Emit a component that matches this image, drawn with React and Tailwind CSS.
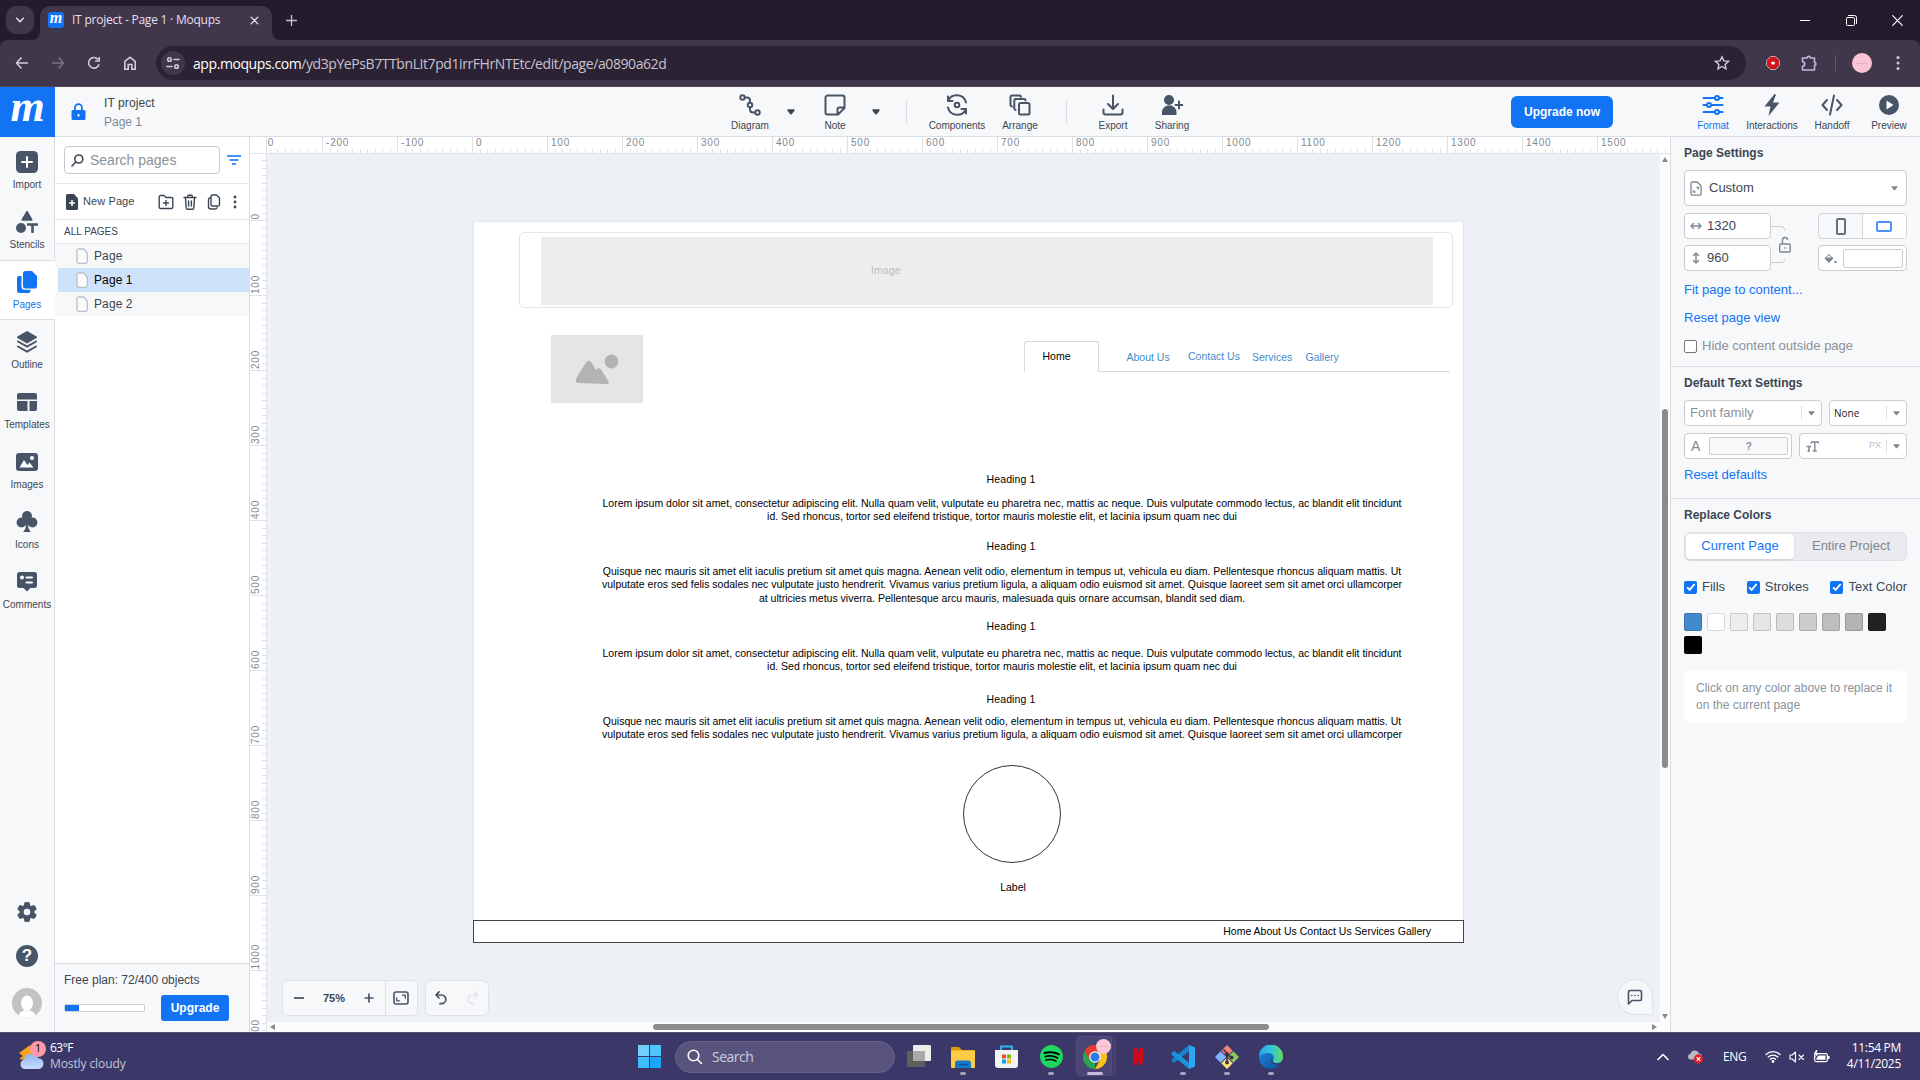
import React from "react";
import { SiNetflix, SiSpotify } from "react-icons/si";

function Ico({ w = 24, h, vb, sw = 2, fill = "none", className = "", children }) {
  return (
    <svg
      width={w}
      height={h || w}
      viewBox={vb || "0 0 24 24"}
      fill={fill}
      stroke={fill === "none" ? "currentColor" : "none"}
      strokeWidth={sw}
      strokeLinecap="round"
      strokeLinejoin="round"
      className={"shrink-0 " + className}
    >
      {children}
    </svg>
  );
}

/* ---------- Browser chrome ---------- */

function TabStrip() {
  return (
    <div className="flex h-10 items-start bg-[#241c2e] text-[#e6dfee]">
      <div className="mt-1.5 ml-1.5 flex h-7 w-7 items-center justify-center rounded-[10px] bg-[#41374b]">
        <Ico w={10} sw={3.6}><path d="M4 8l8 8 8-8" /></Ico>
      </div>
      <div className="relative mt-1.5 ml-[6px] flex h-[34px] w-[232px] items-center rounded-t-[10px] bg-[#41374b] pb-1.5">
        <svg className="absolute bottom-0 -left-2" width="8" height="8"><path d="M8 0v8H0a8 8 0 0 0 8-8z" fill="#41374b" /></svg>
        <svg className="absolute -right-2 bottom-0" width="8" height="8"><path d="M0 0v8h8a8 8 0 0 1-8-8z" fill="#41374b" /></svg>
        <div className="ml-[8px] flex h-4 w-4 items-center justify-center rounded-[3px] bg-[#1273f5]">
          <span className="-mt-[5px] font-['Liberation_Serif',serif] text-[16px] leading-4 font-bold text-white italic">m</span>
        </div>
        <span className="ml-2 w-[155px] text-[12px] leading-4 tracking-[-0.23px] whitespace-nowrap">IT project - Page 1 · Moqups</span>
        <Ico w={9} sw={3.6} className="ml-[23px]"><path d="M3 3l18 18M21 3L3 21" /></Ico>
      </div>
      <Ico w={11} sw={3} className="mt-[15px] ml-[14px] text-[#c9bfd3]"><path d="M12 1v22M1 12h22" /></Ico>
      <div className="ml-auto flex h-10 items-center pr-[17px] text-white">
        <span className="h-px w-[10px] bg-white" />
        <Ico w={11} sw={1} vb="0 0 11 11" className="ml-[36px]"><rect x=".5" y="2.5" width="8" height="8" rx="1" /><path d="M2.5 .5h6a2 2 0 0 1 2 2v6" /></Ico>
        <Ico w={11} sw={1.2} vb="0 0 11 11" className="ml-[35px]"><path d="M.7 .7l9.6 9.6M10.3 .7L.7 10.3" /></Ico>
      </div>
    </div>
  );
}

function AddressBar() {
  return (
    <div className="bg-[#241c2e]">
      <div className="flex h-[47px] items-center rounded-t-lg border-b border-[#524a58] bg-[#41374b] text-[#d3c9dc]">
        <Ico w={14} vb="0 0 14 14" sw={1.6} className="ml-[15px]"><path d="M13 7H1.5M6.5 1.5L1.5 7l5 5.5" strokeLinecap="butt" /></Ico>
        <Ico w={14} vb="0 0 14 14" sw={1.6} className="ml-[22px] text-[#7b7184]"><path d="M1 7h11.500M7.5 1.5l5 5.500-5 5.500" strokeLinecap="butt" /></Ico>
        <Ico w={14} vb="0 0 14 14" sw={1.6} className="ml-[22px]"><path d="M12 8.200A5.300 5.300 0 1 1 11 3.500M12.200 1v4h-4" strokeLinecap="butt" /></Ico>
        <Ico w={14} vb="0 0 14 14" sw={1.6} className="ml-[22px]"><path d="M1.800 13.200V5.500L7 1.300l5.200 4.200v7.700H8.800V8.500H5.200v4.700z" strokeLinejoin="miter" /></Ico>
        <div className="ml-[19px] flex h-[34px] w-[1590px] items-center rounded-full bg-[#2b2334]">
          <div className="ml-[5px] flex h-6 w-6 items-center justify-center rounded-full bg-[#41374b]">
            <Ico w={14} vb="0 0 14 14" sw={1.6}><circle cx="3.500" cy="3.500" r="1.800" /><path d="M8 3.500h5M1 10.500h5" /><circle cx="10.500" cy="10.500" r="1.800" /></Ico>
          </div>
          <span className="ml-2 text-[14px] tracking-[-0.42px] whitespace-nowrap text-[#c9c1d0]"><span className="text-white">app.moqups.com</span>/yd3pYePsB7TTbnLIt7pd1irrFHrNTEtc/edit/page/a0890a62d</span>
          <Ico w={16} vb="0 0 16 16" sw={1.4} className="mr-[16px] ml-auto"><path d="M8 1.800l1.900 4.100 4.500.5-3.300 3 .9 4.400L8 11.500l-4 2.300.9-4.400-3.300-3 4.500-.5z" strokeLinejoin="miter" /></Ico>
        </div>
        <svg width="14" height="14" className="ml-[20px] shrink-0"><path d="M4.500 .5h5l4 4v5l-4 4h-5l-4-4v-5z" fill="#d0161c" stroke="#b9a9b5" /><rect x="5.300" y="5.800" width="3.500" height="2.600" rx=".8" fill="#fff" /></svg>
        <Ico w={18} vb="0 0 18 18" sw={1.6} className="ml-[20px] text-[#c5b8e0]"><path d="M2.500 4h4.700a1.600 1.600 0 0 1 3.200 0h4.100v4.500a1.400 1.400 0 0 1 0 2.800V16H2.500v-3.800a2.200 2.200 0 0 0 0-4.400z" /></Ico>
        <span className="ml-[17px] h-4 w-px bg-[#665a72]" />
        <div className="ml-[16px] flex h-5 w-5 items-center justify-center rounded-full bg-[#fbc4d4]"><span className="h-px w-2.5 bg-[#e7a9bd]" /></div>
        <Ico w={4} h={16} vb="0 0 4 16" fill="currentColor" className="ml-[24px]"><circle cx="2" cy="2.500" r="1.500" /><circle cx="2" cy="8" r="1.500" /><circle cx="2" cy="13.500" r="1.500" /></Ico>
      </div>
    </div>
  );
}

/* ---------- Editor header ---------- */

function HeaderItem({ label, w, color = "text-[#475567]", text = "text-[#3b4652]", children }) {
  return (
    <div className={"flex h-[49px] shrink-0 flex-col items-center pt-[8px] " + w}>
      <div className={"flex h-5 items-center " + color}>{children}</div>
      <span className={"mt-[5px] text-[10px] leading-3 whitespace-nowrap " + text}>{label}</span>
    </div>
  );
}

function Caret({ className = "" }) {
  return <svg width="8" height="6" className={"shrink-0 " + className}><path d="M.5 .3h7v1.500L4.500 5.500h-1L.5 1.800z" fill="currentColor" /></svg>;
}

function Header() {
  return (
    <header className="flex h-[50px] border-b border-[#dadee4] bg-[#f7f8fa]">
      <div className="-mb-px flex h-[50px] w-[55px] shrink-0 items-center justify-center bg-[#1273f5]">
        <span className="-mt-[10px] font-['Liberation_Serif',serif] text-[44px] leading-[40px] font-bold text-white italic">m</span>
      </div>
      <svg width="15" height="18" viewBox="0 0 15 18" className="mt-[16px] ml-[16px] shrink-0"><path d="M4 8V4.500a3.400 3.400 0 0 1 6.900 0V8" fill="none" stroke="#1273f5" strokeWidth="1.800" /><rect x=".5" y="7" width="14" height="10" rx="1.500" fill="#1273f5" /><path d="M7.500 11v2.500" stroke="#fff" strokeWidth="1.800" /></svg>
      <div className="mt-[7px] ml-[18px] w-[621px] text-[12px] leading-[19px] text-[#3b4652]">
        <div className="tracking-[0.1px]">IT project</div>
        <div className="text-[#7f8a96]">Page 1</div>
      </div>
      <HeaderItem label="Diagram" w="w-[50px]">
        <Ico w={22} vb="0 0 22 22"><circle cx="3.500" cy="3.500" r="2.200" /><circle cx="11" cy="11" r="2.200" /><circle cx="18.500" cy="18.500" r="2.200" /><path d="M6 3.500h2a3 3 0 0 1 3 3v2M11 13.500v2a3 3 0 0 0 3 3h2" /></Ico>
      </HeaderItem>
      <Caret className="mt-[22px] ml-[12px] text-[#3b4652]" />
      <HeaderItem label="Note" w="w-[40px] ml-[20px]">
        <Ico w={22} vb="0 0 22 22"><path d="M3.500 1.500h15a2 2 0 0 1 2 2V14l-6.500 6.500H3.500a2 2 0 0 1-2-2v-15a2 2 0 0 1 2-2zM13.500 20v-4.500a2 2 0 0 1 2-2H20" /></Ico>
      </HeaderItem>
      <Caret className="mt-[22px] ml-[17px] text-[#3b4652]" />
      <span className="mt-[13px] ml-[26px] h-6 w-px bg-[#dadee4]" />
      <HeaderItem label="Components" w="w-[60px] ml-[20px]">
        <Ico w={22} vb="0 0 22 22"><path d="M2 7A9.500 9.500 0 0 1 20 8.500M20 15A9.500 9.500 0 0 1 2 13.500M2 2.500V7h4.500M20 19.500V15h-4.500" /><circle cx="11" cy="11" r="2.300" /></Ico>
      </HeaderItem>
      <HeaderItem label="Arrange" w="w-[50px] ml-[8px]">
        <Ico w={22} vb="0 0 22 22"><rect x="10" y="9" width="10.500" height="11.500" rx="1.500" /><path d="M6.500 16a1.500 1.500 0 0 1-1.200-1.500V6.500A1.500 1.500 0 0 1 6.800 5H15a1.500 1.500 0 0 1 1.500 1.500M3 12.500A1.500 1.500 0 0 1 1.500 11V3A1.500 1.500 0 0 1 3 1.500h7.500A1.500 1.500 0 0 1 12 2.800" /></Ico>
      </HeaderItem>
      <span className="mt-[13px] ml-[21px] h-6 w-px bg-[#dadee4]" />
      <HeaderItem label="Export" w="w-[40px] ml-[26px]">
        <Ico w={22} vb="0 0 22 22"><path d="M11 1.500v13M6 10l5 5 5-5M1.500 15.500v3a2 2 0 0 0 2 2h15a2 2 0 0 0 2-2v-3" /></Ico>
      </HeaderItem>
      <HeaderItem label="Sharing" w="w-[40px] ml-[19px]">
        <Ico w={22} vb="0 0 22 22"><circle cx="8" cy="6" r="5" fill="currentColor" stroke="none" /><path d="M1 21v-2.500a7 7 0 0 1 14.500 0V21z" fill="currentColor" stroke="none" /><path d="M18 7.500v7M14.500 11h7" /></Ico>
      </HeaderItem>
      <button className="mt-[9px] ml-[319px] h-8 w-[102px] rounded-md bg-[#1273f5] text-[12px] font-bold text-white">Upgrade now</button>
      <HeaderItem label="Format" w="w-[60px] ml-[70px]" color="text-[#1273f5]" text="text-[#1273f5]">
        <Ico w={22} vb="0 0 22 22"><path d="M1.500 4h11M17.500 4h3M1.500 11h3M9.500 11h11M1.500 18h11M17.500 18h3" /><circle cx="15" cy="4" r="2" /><circle cx="7" cy="11" r="2" /><circle cx="15" cy="18" r="2" /></Ico>
      </HeaderItem>
      <HeaderItem label="Interactions" w="w-[60px] -ml-px">
        <Ico w={22} vb="0 0 22 22" fill="currentColor"><path d="M13.500 0L3.500 12.500h6L7.500 22l11-13.500h-6.500L15 .5z" /></Ico>
      </HeaderItem>
      <HeaderItem label="Handoff" w="w-[60px]">
        <Ico w={22} vb="0 0 22 22"><path d="M6 6l-4.500 5L6 16M16 6l4.500 5L16 16M13 1.500L9 20.500" /></Ico>
      </HeaderItem>
      <HeaderItem label="Preview" w="w-[54px]">
        <Ico w={22} vb="0 0 22 22" fill="currentColor"><circle cx="11" cy="11" r="10" /><path d="M8.500 6.500v9l7-4.500z" fill="#fff" /></Ico>
      </HeaderItem>
    </header>
  );
}

/* ---------- Left rail ---------- */

function RailItem({ label, active, children }) {
  return (
    <div className={active ? "-mr-px flex h-[60px] flex-col items-center border-y border-[#dadee4] bg-white pt-[10px] pr-px text-[#1273f5]" : "flex h-[60px] flex-col items-center pt-[11px] text-[#475567]"}>
      <Ico w={22} vb="0 0 22 22" fill="currentColor">{children}</Ico>
      <span className={"mt-[6px] text-[10px] leading-3 whitespace-nowrap " + (active ? "text-[#1273f5]" : "text-[#3b4652]")}>{label}</span>
    </div>
  );
}

function Rail() {
  return (
    <nav className="flex w-[55px] shrink-0 flex-col border-r border-[#dadee4] bg-[#f7f8fa] pt-[3px]">
      <RailItem label="Import"><rect width="22" height="22" rx="4.500" /><path d="M11 6v10M6 11h10" stroke="#fff" strokeWidth="2" /></RailItem>
      <RailItem label="Stencils"><path d="M11 -1l5.500 9.500a.8.8 0 0 1-.7 1.200H6.200a.8.800 0 0 1-.7-1.200z" /><circle cx="5" cy="17" r="5" /><path d="M12 13.500h9M16.500 13.500V21" stroke="currentColor" strokeWidth="2.600" /></RailItem>
      <RailItem label="Pages" active><path d="M9.500 0h6.500l5 5v10.500a2 2 0 0 1-2 2H9.500a2.500 2.500 0 0 1-2.500-2.500V2.500A2.500 2.500 0 0 1 9.500 0z" /><path d="M5.500 5H3a2 2 0 0 0-2 2v12.500A2.500 2.500 0 0 0 3.500 22h9a2 2 0 0 0 2-2v-1.200H8.500a3 3 0 0 1-3-3z" /></RailItem>
      <RailItem label="Outline"><path d="M11 0l10 5.800v1L11 12.500 1 6.800v-1z" /><path d="M2 10.500l9 5.200 9-5.200M2 15.500l9 5.200 9-5.200" fill="none" stroke="currentColor" strokeWidth="2" /></RailItem>
      <RailItem label="Templates"><path d="M3 2h16a2 2 0 0 1 2 2v4.500H1V4a2 2 0 0 1 2-2zM1 10h10.500v10H3a2 2 0 0 1-2-2zM13.500 10H21v8a2 2 0 0 1-2 2h-5.500z" /></RailItem>
      <RailItem label="Images"><rect y="2" width="22" height="18" rx="3" /><path d="M3.500 16.500L8 9l3.300 5 2.200-2.500 4 5z" fill="#fff" /><circle cx="16" cy="7" r="2" fill="#fff" /></RailItem>
      <RailItem label="Icons"><circle cx="11" cy="5" r="5" /><circle cx="5.500" cy="11.500" r="4.900" /><circle cx="16.500" cy="11.500" r="4.900" /><path d="M7 6h8v8H7zM10 13h2c0 4 1 6 3 8H7c2-2 3-4 3-8z" /></RailItem>
      <RailItem label="Comments"><path d="M3.500 1h15A2.500 2.500 0 0 1 21 3.500v11a2.500 2.500 0 0 1-2.500 2.500h-4.200L11 20.500 7.700 17H3.500A2.500 2.500 0 0 1 1 14.500v-11A2.500 2.500 0 0 1 3.500 1z" /><circle cx="6" cy="6.500" r="2" fill="#fff" /><path d="M10.500 6.500h5.500M10.500 11.500h5.500" stroke="#fff" strokeWidth="2" /></RailItem>
      <div className="mt-auto flex flex-col items-center text-[#475567]">
        <Ico w={22} vb="0 0 22 22" fill="currentColor">
          <circle cx="11" cy="11" r="7.500" />
          {[0, 60, 120].map((a) => <rect key={a} x="8" y="1" width="6" height="20" rx="2" transform={`rotate(${a} 11 11)`} />)}
          <circle cx="11" cy="11" r="3.300" fill="#f7f8fa" />
        </Ico>
        <div className="mt-[22px] flex h-[22px] w-[22px] items-center justify-center rounded-full bg-[#475567] text-[17px] font-bold text-white">?</div>
        <svg width="30" height="30" className="mt-[21px] mb-[14px]"><defs><clipPath id="av"><circle cx="15" cy="15" r="15" /></clipPath></defs><g clipPath="url(#av)"><rect width="30" height="30" fill="#c3c3c3" /><ellipse cx="15" cy="15" rx="6" ry="7.500" fill="#fff" /><ellipse cx="15" cy="30" rx="9" ry="8" fill="#fff" /></g></svg>
      </div>
    </nav>
  );
}

/* ---------- Pages panel ---------- */

function PageRow({ name, active }) {
  return (
    <div className={active ? "ml-[3px] flex h-6 items-center bg-[#cfe2fc] pl-[18px] text-black" : "flex h-6 items-center bg-[#f7f8fa] pl-[21px] text-[#3b4652]"}>
      <svg width="12" height="16" className="shrink-0"><path d="M2.800 1h5l3.500 4v8.500A1.800 1.800 0 0 1 9.500 15.300H2.800A1.800 1.800 0 0 1 1 13.500v-10.700A1.800 1.800 0 0 1 2.800 1z" fill="#fbfbfc" stroke="#bcc0c5" strokeWidth="1.300" /></svg>
      <span className="ml-[6px] text-[12px] tracking-[0.1px]">{name}</span>
    </div>
  );
}

function PagesPanel() {
  return (
    <section className="flex w-[195px] shrink-0 flex-col border-r border-[#dadee4] bg-white text-[#3b4652]">
      <div className="flex h-[47px] items-center border-b border-[#e6e9ed]">
        <div className="ml-[9px] flex h-7 w-[156px] items-center rounded border border-[#c5c9ce]">
          <Ico w={13} vb="0 0 13 13" sw={1.600} className="ml-[6px]"><circle cx="7.800" cy="5" r="4" /><path d="M4.800 8L1 12" /></Ico>
          <span className="ml-[6px] text-[14px] text-[#8a929b]">Search pages</span>
        </div>
        <Ico w={14} h={10} vb="0 0 14 10" sw={1.800} className="ml-[7px] text-[#4a92f7]"><path d="M0 1h14M2.500 5h9M5 9h4" strokeLinecap="butt" /></Ico>
      </div>
      <div className="flex h-9 items-center border-b border-[#e6e9ed]">
        <svg width="12" height="16" className="ml-[11px] shrink-0"><path d="M1.500 0H8l4 4.500V14.500A1.500 1.500 0 0 1 10.500 16h-9A1.500 1.500 0 0 1 0 14.500v-13A1.500 1.500 0 0 1 1.500 0z" fill="#3b4652" /><path d="M6 6v6M3 9h6" stroke="#fff" strokeWidth="1.600" /></svg>
        <span className="ml-[5px] w-[53px] text-[11px] tracking-[0.1px] whitespace-nowrap">New Page</span>
        <Ico w={16} vb="0 0 16 16" sw={1.400} className="ml-[22px]"><path d="M2.500 1.500h3.500l2 2h5.500a1.300 1.300 0 0 1 1.300 1.300v8.400a1.300 1.300 0 0 1-1.300 1.300h-11a1.300 1.300 0 0 1-1.300-1.300V2.800a1.300 1.300 0 0 1 1.300-1.300zM8 6.500v5M5.500 9h5" /></Ico>
        <Ico w={14} h={16} vb="0 0 14 16" sw={1.400} className="ml-[9px]"><path d="M1 3.500h12M4.500 3.300l.5-2h4l.5 2M2.500 4l.7 10a1.300 1.300 0 0 0 1.300 1.200h5a1.300 1.300 0 0 0 1.300-1.200l.7-10M5.600 7v5M8.400 7v5" /></Ico>
        <Ico w={14} h={16} vb="0 0 14 16" sw={1.400} className="ml-[10px]"><path d="M5.500 1h4l3 3v6.500A1.500 1.500 0 0 1 11 12H5.500A1.500 1.500 0 0 1 4 10.500v-8A1.500 1.500 0 0 1 5.500 1zM3.500 3.500C2.200 3.700 1.500 4.300 1.500 5.500v7a2.500 2.500 0 0 0 2.500 2.500h4c1.200 0 1.700-.5 2-1.300" /></Ico>
        <Ico w={4} h={14} vb="0 0 4 14" fill="currentColor" className="ml-[12px]"><circle cx="2" cy="2" r="1.400" /><circle cx="2" cy="7" r="1.400" /><circle cx="2" cy="12" r="1.400" /></Ico>
      </div>
      <div className="flex h-6 items-center border-b border-[#e6e9ed] pl-[9px] text-[10px]">ALL PAGES</div>
      <PageRow name="Page" />
      <PageRow name="Page 1" active />
      <PageRow name="Page 2" />
      <div className="mt-auto h-[69px] border-t border-[#dadee4] bg-[#f7f8fa] pl-[9px]">
        <div className="mt-[8px] text-[12px] leading-4">Free plan: 72/400 objects</div>
        <div className="mt-[7px] flex items-center">
          <div className="h-2 w-[81px] rounded-[2px] border border-[#cdd2d8] bg-white"><div className="h-full w-[14px] bg-[#1273f5]" /></div>
          <button className="ml-[16px] h-[26px] w-[68px] rounded-[3px] bg-[#1273f5] text-[12px] font-bold text-white">Upgrade</button>
        </div>
      </div>
    </section>
  );
}

/* ---------- Rulers ---------- */

const minor = [0, 1, 2, 3, 4, 5, 6, 7, 8, 9];

function HorizontalRuler() {
  const marks = [];
  for (let v = -300; v <= 1500; v += 100) marks.push(v);
  return (
    <div className="flex h-[17px] w-[1403px] overflow-hidden border-b border-[#dfe3e8] bg-white">
      <div className="-ml-[20px] flex">
        {marks.map((v) => (
          <div key={v} className="relative flex h-4 w-[75px] shrink-0 items-end border-l border-[#dfe1e8]">
            <span className="absolute top-[1px] left-[3px] text-[10px] leading-[10px] tracking-[0.8px] text-[#7f8893]">{v}</span>
            {minor.map((m) => <span key={m} className={m ? "h-1 w-[7.5px] shrink-0 border-l border-[#dfe1e8]" : "w-[6.5px] shrink-0"} />)}
          </div>
        ))}
      </div>
    </div>
  );
}

function VerticalRuler() {
  const marks = [];
  for (let v = -100; v <= 1000; v += 100) marks.push(v);
  return (
    <div className="flex w-[17px] shrink-0 flex-col overflow-hidden border-r border-[#dfe3e8] bg-white">
      <div className="z-10 h-[17px] shrink-0 border-b border-[#dfe3e8] bg-white" />
      <div className="-mt-[9px] flex shrink-0 flex-col">
        {marks.map((v) => (
          <div key={v} className="relative flex h-[75px] shrink-0 flex-col items-end border-t border-[#dfe1e8]">
            <span className="absolute bottom-px left-[1px] rotate-180 text-[10px] leading-[10px] tracking-[0.8px] text-[#7f8893] [writing-mode:vertical-rl]">{v + 100}</span>
            {minor.map((m) => <span key={m} className={m ? "h-[7.5px] w-1 shrink-0 border-t border-[#dfe1e8]" : "h-[6.5px] shrink-0"} />)}
          </div>
        ))}
      </div>
    </div>
  );
}

/* ---------- Artboard ---------- */

const lorem = [
  "Lorem ipsum dolor sit amet, consectetur adipiscing elit. Nulla quam velit, vulputate eu pharetra nec, mattis ac neque. Duis vulputate commodo lectus, ac blandit elit tincidunt",
  "id. Sed rhoncus, tortor sed eleifend tristique, tortor mauris molestie elit, et lacinia ipsum quam nec dui",
];
const quisque = [
  "Quisque nec mauris sit amet elit iaculis pretium sit amet quis magna. Aenean velit odio, elementum in tempus ut, vehicula eu diam. Pellentesque rhoncus aliquam mattis. Ut",
  "vulputate eros sed felis sodales nec vulputate justo hendrerit. Vivamus varius pretium ligula, a aliquam odio euismod sit amet. Quisque laoreet sem sit amet orci ullamcorper",
  "at ultricies metus viverra. Pellentesque arcu mauris, malesuada quis ornare accumsan, blandit sed diam.",
];

function Para({ lines, className }) {
  return (
    <div className={"absolute left-[118px] w-[820px] text-center leading-[13.5px] whitespace-nowrap " + className}>
      {lines.map((l) => <div key={l}>{l}</div>)}
    </div>
  );
}

function Heading({ className }) {
  return <div className={"absolute left-[487px] w-[100px] text-center leading-[14px] tracking-[0.1px] " + className}>Heading 1</div>;
}

function Artboard() {
  return (
    <div className="absolute top-[67px] left-[206px] h-[722px] w-[991px] border border-[#e3e6ea] bg-white text-[10.5px] text-black">
      <div className="absolute top-[10px] left-[45px] h-[76px] w-[934px] rounded-[5px] border border-[#e6e6e6]" />
      <div className="absolute top-[15px] left-[67px] h-[68px] w-[892px] bg-[#ededed]" />
      <div className="absolute top-[41px] left-[397px] leading-[14px] tracking-[0.1px] text-[#bdbdbd]">Image</div>
      <div className="absolute top-[113px] left-[77px] h-[68px] w-[92px] bg-[#e5e5e5]">
        <svg width="92" height="68"><path d="M28 47c-3 0-4-2-2.500-5l9.500-15.500c1.500-2.500 4-2.500 5.500 0l4.500 7.500c1.500-2.500 4-2.500 5.500 0l7 11.500c1 1.500 0 2.500-1.500 2.500z" fill="#b3b3b3" transform="translate(0 1)" /><circle cx="60.500" cy="26.500" r="6.900" fill="#b3b3b3" /></svg>
      </div>
      <div className="absolute top-[149px] left-[624px] h-px w-[352px] bg-[#d9d9d9]" />
      <div className="absolute top-[119px] left-[550px] h-[31px] w-[75px] rounded-t-[3px] border border-b-0 border-[#d9d9d9] bg-white" />
      <div className="absolute top-[127px] left-[568.5px] leading-[14px]">Home</div>
      <div className="text-[#428bca]">
        <div className="absolute top-[128px] left-[652.5px] leading-[14px]">About Us</div>
        <div className="absolute top-[127px] left-[714px] leading-[14px]">Contact Us</div>
        <div className="absolute top-[128px] left-[778px] leading-[14px]">Services</div>
        <div className="absolute top-[128px] left-[831.5px] leading-[14px]">Gallery</div>
      </div>
      <Heading className="top-[250px]" />
      <Para lines={lorem} className="top-[274.5px]" />
      <Heading className="top-[317px]" />
      <Para lines={quisque} className="top-[342.5px]" />
      <Heading className="top-[397px]" />
      <Para lines={lorem} className="top-[424.5px]" />
      <Heading className="top-[470px]" />
      <Para lines={quisque.slice(0, 2)} className="top-[492.5px]" />
      <div className="absolute top-[543px] left-[489px] h-[98px] w-[98px] rounded-full border border-[#333]" />
      <div className="absolute top-[658px] left-[489px] w-[100px] text-center leading-[14px]">Label</div>
      <div className="absolute top-[698px] -left-px flex h-[23px] w-[991px] items-center justify-end border border-[#444] pr-[32px] pb-[2px] leading-[14px]">Home About Us Contact Us Services Gallery</div>
    </div>
  );
}

function FloatingTools() {
  return (
    <>
      <div className="absolute top-[826px] left-[15px] flex h-9 w-[136px] items-center rounded-md border border-[#dfe3e8] bg-[#f7f8fa] text-[#475567]">
        <span className="ml-[11px] h-[2px] w-[10px] shrink-0 bg-[#5d6875]" />
        <span className="ml-[15px] w-[30px] shrink-0 text-center text-[11px] font-bold text-[#3b4652]">75%</span>
        <Ico w={10} vb="0 0 10 10" sw={1.700} className="ml-[15px]"><path d="M5 .5v9M.5 5h9" strokeLinecap="butt" /></Ico>
        <span className="ml-[11px] h-full w-px bg-[#dfe3e8]" />
        <Ico w={16} h={14} vb="0 0 16 14" sw={1.600} className="ml-[7px]"><rect x="1" y="1" width="14" height="12" rx="2" /><path d="M9.500 4.200h2.800V7M6.500 9.800H3.700V7" strokeWidth="1.300" /></Ico>
      </div>
      <div className="absolute top-[826px] left-[158px] flex h-9 w-[64px] items-center rounded-md border border-[#dfe3e8] bg-[#f7f8fa] pl-[9px] text-[#475567]">
        <Ico w={12} h={14} vb="0 0 12 14" sw={1.700}><path d="M4 .8L1 4h5.500a4.300 4.300 0 0 1 0 8.700H5M4 7L1 4" /></Ico>
        <Ico w={12} h={14} vb="0 0 12 14" sw={1.700} className="ml-[20px] text-[#e1e4e8]"><path d="M8 .8L11 4H5.500a4.300 4.300 0 0 0 0 8.700H7M8 7l3-3" /></Ico>
      </div>
      <div className="absolute top-[825px] left-[1350px] flex h-9 w-9 items-center justify-center rounded-full rounded-br-[3px] border border-[#dfe3e8] bg-[#f7f8fa] text-[#475567]">
        <Ico w={16} vb="0 0 16 16" sw={1.600}><path d="M3 1.500h10A1.500 1.500 0 0 1 14.500 3v7a1.500 1.500 0 0 1-1.500 1.500H5L1.500 15V3A1.500 1.500 0 0 1 3 1.500z" /><path d="M4.800 6.500h.1M8 6.500h.1M11.200 6.500h.1" /></Ico>
      </div>
    </>
  );
}

function Workspace() {
  return (
    <main className="flex w-[1420px] shrink-0">
      <VerticalRuler />
      <div className="flex w-[1403px] flex-col">
        <HorizontalRuler />
        <div className="flex h-[868px]">
          <div className="relative h-[868px] w-[1393px] overflow-hidden bg-[#edf0f5]">
            <Artboard />
            <FloatingTools />
          </div>
          <div className="flex w-[10px] flex-col items-center bg-[#fcfcfc]">
            <svg width="6" height="5" className="mt-[3px]"><path d="M3 0l3 5H0z" fill="#8a8a8a" /></svg>
            <div className="mt-[247px] h-[359px] w-[6px] rounded-full bg-[#8b8b8b]" />
            <svg width="6" height="5" className="mt-auto mb-[3px]"><path d="M0 0h6L3 5z" fill="#8a8a8a" /></svg>
          </div>
        </div>
        <div className="flex h-[10px] items-center bg-[#fcfcfc]">
          <svg width="5" height="6" className="ml-[3px]"><path d="M5 0v6L0 3z" fill="#8a8a8a" /></svg>
          <div className="ml-[378px] h-[6px] w-[616px] rounded-full bg-[#8b8b8b]" />
          <svg width="5" height="6" className="mr-[13px] ml-auto"><path d="M0 0v6l5-3z" fill="#8a8a8a" /></svg>
        </div>
      </div>
    </main>
  );
}

/* ---------- Settings panel ---------- */

function Box({ className = "", children }) {
  return <div className={"flex items-center rounded border border-[#c9cdd2] bg-white " + className}>{children}</div>;
}

function Check({ on }) {
  return on ? (
    <span className="flex h-[13px] w-[13px] shrink-0 items-center justify-center rounded-[2px] bg-[#1273f5] text-white">
      <Ico w={10} vb="0 0 10 10" sw={1.900}><path d="M1.200 5.300l2.500 2.500L8.600 2" strokeLinecap="butt" strokeLinejoin="miter" /></Ico>
    </span>
  ) : (
    <span className="h-[13px] w-[13px] shrink-0 rounded-[2px] border border-[#767676] bg-white" />
  );
}

function DropCaret({ className = "" }) {
  return <svg width="7" height="5" viewBox="0 0 8 5" className={"shrink-0 " + className}><path d="M.5 0h7v.8L4.500 4.500h-1L.5 .8z" fill="#7f8790" /></svg>;
}

const swatches = ["bg-[#428bca]", "bg-white", "bg-[#ededed]", "bg-[#e5e5e5]", "bg-[#dddddd]", "bg-[#cccccc]", "bg-[#bebebe]", "bg-[#b3b3b3]", "bg-[#222222]", "bg-black"];

function SettingsPanel() {
  return (
    <aside className="w-[250px] border-l border-[#dadee4] bg-[#f7f8fa] text-[#3b4652]">
      <div className="h-[230px] border-b border-[#dfe3e8] pt-[8px] pl-[13px]">
        <div className="text-[12px] leading-4 font-bold">Page Settings</div>
        <Box className="mt-[9px] h-9 w-[223px]">
          <svg width="12" height="15" className="ml-[5px] shrink-0" fill="none" stroke="#7f8790" strokeWidth="1.300"><path d="M2.300 1h5l3.800 4v7.800a1.300 1.300 0 0 1-1.300 1.300H2.300A1.300 1.300 0 0 1 1 12.800V2.300A1.300 1.300 0 0 1 2.300 1z" /><path d="M6.500 6.500H8.500V8.500M5.500 11H3.500V9" /></svg>
          <span className="ml-[7px] text-[13px]">Custom</span>
          <DropCaret className="mr-[8px] ml-auto" />
        </Box>
        <div className="mt-[7px] flex">
          <div className="flex flex-col gap-[6px]">
            <Box className="h-[26px] w-[87px] text-[13px]">
              <Ico w={12} h={8} vb="0 0 12 8" sw={1.400} className="ml-[5px] text-[#7f8790]"><path d="M1 4h10M3.500 1.500L1 4l2.500 2.500M8.500 1.500L11 4 8.500 6.500" /></Ico>
              <span className="ml-[5px]">1320</span>
            </Box>
            <Box className="h-[26px] w-[87px] text-[13px]">
              <Ico w={12} h={12} vb="0 0 12 12" sw={1.400} className="ml-[5px] text-[#7f8790]"><path d="M6 1v10M3.500 3.500L6 1l2.500 2.500M3.500 8.500L6 11l2.500-2.500" /></Ico>
              <span className="ml-[5px]">960</span>
            </Box>
          </div>
          <svg width="22" height="58" fill="none" stroke="#c9cdd2"><path d="M0 13.500h11q2.500 0 2.500 4M0 49.500h11q2.500 0 2.500-3" /><g stroke="#7f8790" strokeWidth="1.400"><rect x="8.700" y="31" width="10.500" height="8" rx="1" /><path d="M11.500 31v-4a2.500 2.500 0 0 1 5 0" /><path d="M14 34.300v1.400" /></g></svg>
          <div className="ml-[25px] flex flex-col gap-[6px]">
            <div className="flex h-[26px] w-[89px] rounded border border-[#d2d6db]">
              <div className="flex w-[43px] items-center justify-center"><span className="h-[17px] w-[10px] rounded-[2px] border-2 border-[#66717e]" /></div>
              <div className="flex flex-1 items-center justify-center rounded-r border-l border-[#d2d6db] bg-white"><span className="-ml-px h-[11px] w-4 rounded-[2px] border-2 border-[#4a92f7]" /></div>
            </div>
            <Box className="h-[26px] w-[89px]">
              <Ico w={13} h={12} vb="0 0 13 12" fill="#7f8790" className="ml-[5px]"><path d="M3 .5l6.500 5.800L5 11 .5 6.500 4.500 2.500z" /><path d="M2.500 5.500h5L5 3.200z" fill="#fff" /><circle cx="11.500" cy="10" r="1.200" /></Ico>
              <span className="ml-[6px] h-[19px] w-[60px] rounded-[2px] border border-[#c9cdd2] bg-white" />
            </Box>
          </div>
        </div>
        <div className="mt-[11px] text-[13px] leading-4 text-[#1273f5]">Fit page to content...</div>
        <div className="mt-[12px] text-[13px] leading-4 text-[#1273f5]">Reset page view</div>
        <div className="mt-[12px] flex items-center text-[13px] leading-4 text-[#8a929b]"><Check /><span className="ml-[5px]">Hide content outside page</span></div>
      </div>
      <div className="h-[132px] border-b border-[#dfe3e8] pt-[8px] pl-[13px]">
        <div className="text-[12px] leading-4 font-bold">Default Text Settings</div>
        <div className="mt-[9px] flex gap-[7px]">
          <Box className="h-[26px] w-[138px]">
            <span className="ml-[5px] text-[13px] text-[#8a929b]">Font family</span>
            <span className="ml-auto h-[14px] w-px bg-[#dfe1e5]" /><DropCaret className="mr-[6px] ml-[6px]" />
          </Box>
          <Box className="h-[26px] w-[78px]">
            <span className="ml-[4px] font-['Open_Sans',sans-serif] text-[10px] text-[#222]">None</span>
            <span className="ml-auto h-[14px] w-px bg-[#dfe1e5]" /><DropCaret className="mr-[6px] ml-[6px]" />
          </Box>
        </div>
        <div className="mt-[7px] flex gap-[7px]">
          <Box className="h-[26px] w-[108px]">
            <span className="ml-[6px] text-[14px] text-[#7f8790]">A</span>
            <span className="ml-[9px] flex h-[18px] w-[79px] items-center justify-center rounded-[2px] border border-[#c9cdd2] bg-[#f7f8fa] text-[10px] font-bold text-[#8a929b]">?</span>
          </Box>
          <Box className="h-[26px] w-[108px]">
            <Ico w={13} h={11} vb="0 0 13 11" sw={1.700} className="ml-[6px] text-[#7f8790]"><path d="M5 1h7.500M8.800 1v9M6.800 10h4M5.200 2.500V1M12.400 2.500V1M.5 5.500h4.500M2.800 5.500V10M1.500 10h2.600" strokeLinecap="butt" strokeWidth="1.400" /></Ico>
            <span className="ml-[50px] text-[9px] text-[#b9bec4]">PX</span>
            <span className="ml-auto h-[14px] w-px bg-[#dfe1e5]" /><DropCaret className="mr-[6px] ml-[6px]" />
          </Box>
        </div>
        <div className="mt-[8px] text-[13px] leading-4 text-[#1273f5]">Reset defaults</div>
      </div>
      <div className="pt-[8px] pl-[13px]">
        <div className="text-[12px] leading-4 font-bold">Replace Colors</div>
        <div className="mt-[9px] flex h-[29px] w-[223px] items-center rounded-md border border-[#e0e0e6] bg-[#eaeaef] pb-px pl-px text-[13px]">
          <div className="flex h-[25px] w-[108px] items-center justify-center rounded bg-white text-[#1273f5] shadow-sm">Current Page</div>
          <div className="flex-1 pl-[2px] text-center text-[#7f8790]">Entire Project</div>
        </div>
        <div className="mt-[18px] flex h-4 w-[223px] items-center justify-between text-[13px] whitespace-nowrap">
          <span className="flex items-center gap-[5px]"><Check on />Fills</span>
          <span className="flex items-center gap-[5px]"><Check on />Strokes</span>
          <span className="flex items-center gap-[5px]"><Check on />Text Color</span>
        </div>
        <div className="mt-[18px] flex w-[223px] flex-wrap gap-[5px]">
          {swatches.map((c) => <span key={c} className={"h-[18px] w-[18px] rounded-[2px] border border-black/15 " + c} />)}
        </div>
        <div className="mt-[17px] h-[52px] w-[223px] rounded-md bg-white pt-[9px] pl-[12px] text-[12px] leading-[17px] whitespace-nowrap text-[#8a929b]">
          Click on any color above to replace it<br />on the current page
        </div>
      </div>
    </aside>
  );
}

/* ---------- Taskbar ---------- */

function TaskIcon({ dot, children }) {
  return (
    <div className="relative flex h-full w-11 shrink-0 items-center justify-center">
      {children}
      {dot && <span className="absolute bottom-[5px] h-[3px] w-[6px] rounded-full bg-[#a6a2bd]" />}
    </div>
  );
}

function Taskbar() {
  return (
    <footer className="flex h-12 items-center border-t border-[#57526f] bg-[#3c3769] text-white">
      <div className="flex w-[638px] items-center">
        <div className="relative -mt-px ml-[18px] h-[30px] w-[32px]">
          <svg width="28" height="30"><defs><linearGradient id="cl" x1="0" y1="0" x2="0" y2="1"><stop offset="0" stopColor="#8fb6f2" /><stop offset="1" stopColor="#c9dcfb" /></linearGradient></defs><path d="M12 4l2 4 5-2v11L8 19l-7-1 4-3-4-3z" fill="#f5a21d" /><path d="M6 28a5 5 0 0 1 0-9.500A7.500 7.500 0 0 1 20 17a5.500 5.500 0 0 1 0 11z" fill="url(#cl)" /></svg>
          <span className="absolute top-0 left-[12px] flex h-4 w-4 items-center justify-center rounded-full bg-[#ff99a4] text-[10.5px] text-black">1</span>
        </div>
        <div className="-mt-px text-[12px] leading-4 whitespace-nowrap"><div className="tracking-[-0.5px]">63°F</div><div className="tracking-[-0.1px] text-[#c6c4d4]">Mostly cloudy</div></div>
      </div>
      <div className="grid h-[23px] w-[23px] shrink-0 grid-cols-2 gap-px">
        <span className="bg-[#6fd0fb]" /><span className="bg-[#4fc3fa]" /><span className="bg-[#3fbcfa]" /><span className="bg-[#1ba5f7]" />
      </div>
      <div className="ml-[14px] flex h-8 w-[220px] shrink-0 items-center rounded-full border border-[#67628a] bg-[#58537d]">
        <Ico w={16} vb="0 0 16 16" sw={1.600} className="ml-[11px]"><circle cx="6.500" cy="6.500" r="5.300" /><path d="M10.500 10.500l4 4" /></Ico>
        <span className="-mt-px ml-[9px] text-[14px] tracking-[-0.5px] text-[#cfccdb]">Search</span>
      </div>
      <div className="ml-[2px] flex h-full items-center">
        <TaskIcon><svg width="24" height="23"><rect x="6" width="18" height="16" rx="1" fill="#ececec" /><rect y="6" width="18" height="16" rx="1" fill="#5f5f60" /><rect x="6" y="6" width="12" height="10" fill="#a9a9a9" /></svg></TaskIcon>
        <TaskIcon dot><svg width="24" height="22"><path d="M0 2a1 1 0 0 1 1-1h7l3 3h12a1 1 0 0 1 1 1v5H0z" fill="#dc9b0b" /><rect y="4.500" width="24" height="17.500" rx="1" fill="#fdcb44" /><path d="M4 22v-5a2.500 2.500 0 0 1 2.500-2.500h11A2.500 2.500 0 0 1 20 17v5z" fill="#137bcb" /><path d="M7.500 18.500h9" stroke="#0c4f90" strokeWidth="1.300" /></svg></TaskIcon>
        <TaskIcon><svg width="24" height="24" className="-ml-px"><path d="M6 6V1.500h11V6" fill="none" stroke="#2fb4f0" strokeWidth="2" /><path d="M0 5h23v15a3 3 0 0 1-3 3H3a3 3 0 0 1-3-3z" fill="#f3f3f4" /><rect x="7" y="9.500" width="4" height="4" fill="#f04f23" /><rect x="12" y="9.500" width="4" height="4" fill="#7fbb0b" /><rect x="7" y="14.500" width="4" height="4" fill="#05a5f0" /><rect x="12" y="14.500" width="4" height="4" fill="#fdb913" /></svg></TaskIcon>
        <TaskIcon dot><span className="flex h-[20px] w-[20px] items-center justify-center rounded-full bg-black"><SiSpotify size={23} color="#1ed760" className="shrink-0" /></span></TaskIcon>
        <div className="relative flex h-full w-11 items-center justify-center">
          <span className="absolute top-[3px] left-[3px] h-10 w-[40px] rounded-[5px] border border-[#4d4876] bg-[#433e6e]" />
          <span className="absolute top-[3px] left-[3px] h-10 w-[36px] rounded-[5px] border border-[#544f7c] bg-[#4a4574]" />
          <svg width="24" height="24" viewBox="0 0 24 24" className="relative"><path d="M12 12L12 24A12 12 0 0 1 1.600 6z" fill="#2ba24c" /><path d="M12 6.500h10.700A12 12 0 0 1 12 24l5-9z" fill="#fbc116" /><path d="M12 6.500h10.700A12 12 0 0 0 1.600 6L7 15z" fill="#e33b2e" /><circle cx="12" cy="12" r="5.800" fill="#fff" /><circle cx="12" cy="12" r="4.600" fill="#2e78ee" /></svg>
          <span className="absolute top-[6px] left-[23px] flex h-[15px] w-[15px] items-center justify-center rounded-full bg-[#fcc6d6]"><span className="h-px w-2 bg-[#e9b0c2]" /></span>
          <span className="absolute bottom-[5px] h-[3px] w-4 rounded-full bg-[#c9b9dd]" />
        </div>
        <TaskIcon><SiNetflix size={17} color="#d30a16" className="-ml-px" /></TaskIcon>
        <TaskIcon dot><svg width="24" height="24"><path d="M18 0l6 2.500v19L18 24z" fill="#2ba8f0" /><path d="M18 6.500L3 18l-2.500-2.300v-1.200L18 0z" fill="#1583cb" /><path d="M18 17.500L3 6 .5 8.300v1.200L18 24z" fill="#1b94df" /></svg></TaskIcon>
        <TaskIcon dot><svg width="24" height="24"><g transform="rotate(45 12 12)"><rect x="3.500" y="3.500" width="8" height="8" fill="#f4827c" /><rect x="12.500" y="3.500" width="8" height="8" fill="#8ccb5a" /><rect x="3.500" y="12.500" width="8" height="8" fill="#80b3ff" /><rect x="12.500" y="12.500" width="8" height="8" fill="#ffe27a" /></g><path d="M8.500 4.500l3.500 4v10M12 9l4.500 4" stroke="#36304f" strokeWidth="1.600" fill="none" /><circle cx="12" cy="9" r="1.900" fill="#36304f" /><circle cx="16.500" cy="12.500" r="1.900" fill="#36304f" /><circle cx="12" cy="17.500" r="1.900" fill="#36304f" /></svg></TaskIcon>
        <TaskIcon dot><svg width="24" height="24"><defs><linearGradient id="ea" x1="0" y1="0" x2="1" y2="0"><stop offset="0" stopColor="#2aa7e8" /><stop offset=".55" stopColor="#35c6d6" /><stop offset="1" stopColor="#63dc56" /></linearGradient><linearGradient id="eb" x1="0" y1="0" x2="1" y2="1"><stop offset="0" stopColor="#1d8fe0" /><stop offset="1" stopColor="#0d4c95" /></linearGradient></defs><circle cx="12" cy="12" r="12" fill="url(#eb)" /><path d="M0 11A12 12 0 0 1 24 12c0 4-3 6-6.500 6-2.500 0-4.500-1-3.500-3 2.500-4-1-7-5-7-4.500 0-7.500 1.500-9 3z" fill="url(#ea)" /><path d="M14 14.500c-1.500 3 2 5 8 3.500l1.500 1-1.500 2-9-2.500-1-4z" fill="#3c3769" /></svg></TaskIcon>
      </div>
      <div className="ml-auto flex items-center">
        <Ico w={12} h={8} vb="0 0 12 8" sw={1.600}><path d="M1 6.500l5-5 5 5" /></Ico>
        <svg width="17" height="14" className="ml-[18px]"><path d="M3 9.500a3 3 0 0 1 .5-5.800A4.500 4.500 0 0 1 12 3.500a3 3 0 0 1 0 6z" fill="#b9b8c6" /><circle cx="11.500" cy="9" r="4.700" fill="#d8232e" /><path d="M9.700 7.200l3.600 3.600M13.300 7.200l-3.600 3.600" stroke="#fff" strokeWidth="1.200" /></svg>
        <span className="ml-[19px] w-[25px] text-[12px] tracking-[-0.3px]">ENG</span>
        <Ico w={16} h={13} vb="0 0 16 13" sw={1.300} className="ml-[17px]"><path d="M1 4.500a10 10 0 0 1 14 0M3.200 7a7 7 0 0 1 9.600 0M5.400 9.300a4 4 0 0 1 5.200 0" /><circle cx="8" cy="11.500" r=".8" fill="currentColor" /></Ico>
        <Ico w={16} h={12} vb="0 0 16 12" sw={1.100} className="ml-[8px]"><path d="M1 4h2.200L6.500 1v10L3.200 8H1zM10 4l4.500 4.500M14.500 4L10 8.500" /></Ico>
        <svg width="17" height="13" className="ml-[8px]"><rect x="1.600" y="3.600" width="12.800" height="8" rx="1.800" fill="none" stroke="#fff" strokeWidth="1.200" /><path d="M5.500 5.500H12.500v4.300H3.500V8zM15 6h1.500v3H15z" fill="#fff" /><path d="M3 0L.8 4h2.400L2 7.500 6 3H3.500L4.500 0z" fill="#fff" /></svg>
        <div className="-mt-px mr-[19px] ml-[15px] w-[56px] text-right text-[12px] leading-4 tracking-[-0.3px] whitespace-nowrap"><div>11:54 PM</div><div>4/11/2025</div></div>
      </div>
    </footer>
  );
}

export default function App() {
  return (
    <div className="flex h-[1080px] w-[1920px] flex-col overflow-hidden">
      <div className="font-['Open_Sans','Noto_Sans',sans-serif]">
        <TabStrip />
        <AddressBar />
      </div>
      <div className="font-['Liberation_Sans',Arial,sans-serif]">
        <Header />
        <div className="flex h-[895px]">
          <Rail />
          <PagesPanel />
          <Workspace />
          <SettingsPanel />
        </div>
      </div>
      <div className="font-['Open_Sans','Noto_Sans',sans-serif]">
        <Taskbar />
      </div>
    </div>
  );
}
